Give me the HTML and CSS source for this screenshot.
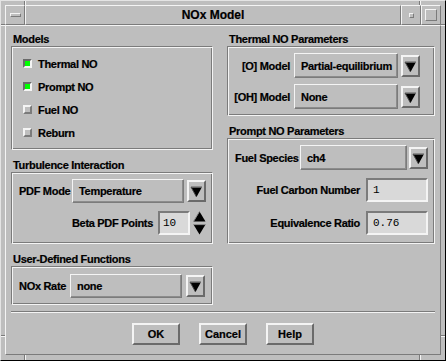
FILE: index.html
```html
<!DOCTYPE html>
<html>
<head>
<meta charset="utf-8">
<link rel="stylesheet" href="styles.css">
</head>
<body>
<div class="window">
  <div class="titlebar">
    <div class="tb-btn tb-menu"><span class="menu-bar"></span></div>
    <div class="tb-title">NOx Model</div>
    <div class="tb-btn tb-min"><span class="min-sq"></span></div>
    <div class="tb-btn tb-max"><span class="max-sq"></span></div>
  </div>
  <div class="client">
    <div class="columns">
      <div class="col col-left">
        <div class="label">Models</div>
        <div class="group models">
          <div class="check-row"><span class="check on"></span>Thermal NO</div>
          <div class="check-row"><span class="check on"></span>Prompt NO</div>
          <div class="check-row"><span class="check"></span>Fuel NO</div>
          <div class="check-row"><span class="check"></span>Reburn</div>
        </div>

        <div class="label gap-top">Turbulence Interaction</div>
        <div class="group turb">
          <div class="row pdf-row">
            <span class="lbl">PDF Mode</span>
            <div class="option opt-pdf">Temperature</div>
            <div class="arrow-btn"><svg width="13" height="16" viewBox="0 0 13 16"><polygon points="1,4 12,4 6.5,14" fill="#000"/><polyline points="1,4 12,4" stroke="#7b7b7b" stroke-width="1.5" fill="none"/><polyline points="1,4 6.5,14" stroke="#4a4a4a" stroke-width="1" fill="none"/></svg></div>
          </div>
          <div class="row beta-row">
            <span class="lbl">Beta PDF Points</span>
            <div class="textfield tf-beta">10</div>
            <div class="spinner">
              <svg width="13" height="11" viewBox="0 0 13 11"><polygon points="6.5,0.5 12.5,10.5 0.5,10.5" fill="#000"/><polyline points="6.5,0.5 0.5,10.5" stroke="#8a8a8a" stroke-width="1" fill="none"/></svg>
              <svg width="13" height="11" viewBox="0 0 13 11"><polygon points="0.5,0.5 12.5,0.5 6.5,10.5" fill="#000"/><polyline points="0.5,0.5 12.5,0.5" stroke="#8a8a8a" stroke-width="1.2" fill="none"/></svg>
            </div>
          </div>
        </div>

        <div class="label gap-top">User-Defined Functions</div>
        <div class="group udf">
          <div class="row udf-row">
            <span class="lbl">NOx Rate</span>
            <div class="option opt-udf">none</div>
            <div class="arrow-btn"><svg width="13" height="16" viewBox="0 0 13 16"><polygon points="1,4 12,4 6.5,14" fill="#000"/><polyline points="1,4 12,4" stroke="#7b7b7b" stroke-width="1.5" fill="none"/><polyline points="1,4 6.5,14" stroke="#4a4a4a" stroke-width="1" fill="none"/></svg></div>
          </div>
        </div>
      </div>

      <div class="col col-right">
        <div class="label">Thermal NO Parameters</div>
        <div class="group thermal">
          <div class="row th-row">
            <span class="lbl lbl-th">[O] Model</span>
            <div class="option opt-th">Partial-equilibrium</div>
            <div class="arrow-btn"><svg width="13" height="16" viewBox="0 0 13 16"><polygon points="1,4 12,4 6.5,14" fill="#000"/><polyline points="1,4 12,4" stroke="#7b7b7b" stroke-width="1.5" fill="none"/><polyline points="1,4 6.5,14" stroke="#4a4a4a" stroke-width="1" fill="none"/></svg></div>
          </div>
          <div class="row th-row">
            <span class="lbl lbl-th">[OH] Model</span>
            <div class="option opt-th">None</div>
            <div class="arrow-btn"><svg width="13" height="16" viewBox="0 0 13 16"><polygon points="1,4 12,4 6.5,14" fill="#000"/><polyline points="1,4 12,4" stroke="#7b7b7b" stroke-width="1.5" fill="none"/><polyline points="1,4 6.5,14" stroke="#4a4a4a" stroke-width="1" fill="none"/></svg></div>
          </div>
        </div>

        <div class="label gap-top">Prompt NO Parameters</div>
        <div class="group prompt">
          <div class="row fs-row">
            <span class="lbl">Fuel Species</span>
            <div class="option opt-fs">ch4</div>
            <div class="arrow-btn"><svg width="13" height="16" viewBox="0 0 13 16"><polygon points="1,4 12,4 6.5,14" fill="#000"/><polyline points="1,4 12,4" stroke="#7b7b7b" stroke-width="1.5" fill="none"/><polyline points="1,4 6.5,14" stroke="#4a4a4a" stroke-width="1" fill="none"/></svg></div>
          </div>
          <div class="row num-row">
            <span class="lbl">Fuel Carbon Number</span>
            <div class="textfield tf-num">1</div>
          </div>
          <div class="row num-row">
            <span class="lbl">Equivalence Ratio</span>
            <div class="textfield tf-num">0.76</div>
          </div>
        </div>
      </div>
    </div>

    <div class="separator"></div>

    <div class="buttons">
      <div class="btn">OK</div>
      <div class="btn">Cancel</div>
      <div class="btn">Help</div>
    </div>
  </div>

  <span class="notch notch-tl-v"></span>
  <span class="notch notch-tr-v"></span>
  <span class="notch notch-bl-v"></span>
  <span class="notch notch-br-v"></span>
  <span class="notch notch-tl-h"></span>
  <span class="notch notch-tr-h"></span>
  <span class="notch notch-bl-h"></span>
  <span class="notch notch-br-h"></span>
</div>
</body>
</html>
```

FILE: styles.css
```css
* { box-sizing: border-box; }

html, body {
  margin: 0;
  padding: 0;
  background: #bebebe;
}

body {
  width: 446px;
  height: 361px;
  overflow: hidden;
  font-family: "Liberation Sans", Arial, sans-serif;
  font-weight: bold;
  font-size: 11px;
  letter-spacing: -0.3px;
  color: #000;
  -webkit-text-stroke: 0.2px #000;
}

.window {
  position: relative;
  width: 446px;
  height: 361px;
  background: #bebebe;
  border-top: 1px solid #e4e4e4;
  border-left: 1px solid #e4e4e4;
  border-right: 1px solid #000;
  border-bottom: 1px solid #000;
  padding: 4px 4px 5px 4px;
  display: flex;
  flex-direction: column;
}

/* ---------- title bar ---------- */
.titlebar {
  height: 20px;
  display: flex;
  flex: none;
}

.tb-btn, .tb-title {
  border-top: 1px solid #f4f4f4;
  border-left: 1px solid #f4f4f4;
  border-right: 1px solid #7b7b7b;
  border-bottom: 1px solid #7b7b7b;
  background: #bebebe;
}

.tb-btn {
  width: 20px;
  display: flex;
  align-items: center;
  justify-content: center;
}

.tb-title {
  flex: 1;
  text-align: center;
  font-size: 12px;
  letter-spacing: 0;
  line-height: 19px;
}

.menu-bar {
  display: block;
  width: 11px;
  height: 4px;
  border-top: 1px solid #f4f4f4;
  border-left: 1px solid #f4f4f4;
  border-right: 1px solid #7b7b7b;
  border-bottom: 1px solid #7b7b7b;
}

.min-sq {
  display: block;
  width: 5px;
  height: 5px;
  border-top: 1px solid #f4f4f4;
  border-left: 1px solid #f4f4f4;
  border-right: 1px solid #7b7b7b;
  border-bottom: 1px solid #7b7b7b;
}

.max-sq {
  display: block;
  width: 12px;
  height: 12px;
  border-top: 1px solid #f4f4f4;
  border-left: 1px solid #f4f4f4;
  border-right: 1px solid #7b7b7b;
  border-bottom: 1px solid #7b7b7b;
}

/* ---------- client ---------- */
.client {
  flex: 1;
  border-top: 1px solid #f4f4f4;
  border-left: 1px solid #f4f4f4;
  border-right: 1px solid #7b7b7b;
  border-bottom: 1px solid #7b7b7b;
  padding: 6px 5px 0 5px;
  display: flex;
  flex-direction: column;
}

.columns {
  display: flex;
  gap: 14px;
}

.col-left { width: 202px; }
.col-right { width: 208px; }

.label {
  height: 14px;
  line-height: 14px;
  padding-left: 2px;
  white-space: nowrap;
}

.gap-top { margin-top: 8px; }

.group {
  border: 1px solid;
  border-color: #7b7b7b #f4f4f4 #f4f4f4 #7b7b7b;
  box-shadow: inset 1px 1px 0 #f4f4f4, inset -1px -1px 0 #7b7b7b;
  padding: 2px;
}

/* models */
.models {
  height: 104px;
  padding: 5px 2px 2px 11px;
}

.check-row {
  height: 23px;
  display: flex;
  align-items: center;
  white-space: nowrap;
}

.check {
  width: 9px;
  height: 9px;
  margin-right: 6px;
  margin-bottom: 1px;
  border: 2px solid;
  border-color: #f4f4f4 #7b7b7b #7b7b7b #f4f4f4;
  background: #bebebe;
}

.check.on {
  border-color: #6a6a6a #f4f4f4 #f4f4f4 #6a6a6a;
  background: #00ff00;
}

/* rows */
.row {
  display: flex;
  align-items: center;
  white-space: nowrap;
}

.lbl { white-space: nowrap; }

.option {
  height: 24px;
  line-height: 23px;
  padding-left: 6px;
  border: 1px solid;
  border-color: #f4f4f4 #7b7b7b #7b7b7b #f4f4f4;
  box-shadow: inset -1px -1px 0 #8c8c8c;
  overflow: hidden;
  white-space: nowrap;
}

.arrow-btn {
  width: 19px;
  height: 22px;
  border: 2px solid;
  border-color: #f4f4f4 #6a6a6a #6a6a6a #f4f4f4;
  display: flex;
  align-items: center;
  justify-content: center;
  flex: none;
}

.arrow-btn svg { display: block; }

.textfield {
  height: 24px;
  line-height: 20px;
  border: 2px solid;
  border-color: #7b7b7b #f4f4f4 #f4f4f4 #7b7b7b;
  background: #d9d9d9;
  font-family: "Liberation Mono", "Courier New", monospace;
  font-weight: normal;
  font-size: 11px;
  letter-spacing: 0;
  -webkit-text-stroke: 0;
  padding-left: 3px;
}

/* turbulence */
.turb {
  height: 72px;
  padding: 6px 6px 0 7px;
}

.pdf-row { height: 24px; }
.pdf-row .lbl { width: 53px; }
.opt-pdf { flex: 1; margin-right: 3px; }

.beta-row {
  height: 24px;
  margin-top: 8px;
  justify-content: flex-end;
}

.tf-beta {
  width: 32px;
  margin-left: 5px;
  margin-right: 3px;
}

.spinner {
  width: 13px;
  height: 24px;
  display: flex;
  flex-direction: column;
  justify-content: space-between;
  padding: 0;
}

.spinner svg { display: block; }

/* udf */
.udf {
  height: 39px;
  padding: 7px 7px 0 7px;
}

.udf-row { height: 24px; }
.udf-row .lbl { width: 51px; }
.opt-udf { flex: 1; margin-right: 4px; }

/* thermal */
.thermal {
  height: 70px;
  padding: 6px 2px 0 4px;
}

.th-row { height: 25px; }
.th-row + .th-row { margin-top: 6px; }

.lbl-th {
  width: 60px;
  text-align: right;
  padding-right: 2px;
}

.opt-th {
  width: 104px;
  height: 25px;
  line-height: 24px;
  margin-left: 2px;
  margin-right: 3px;
}

/* prompt */
.prompt {
  height: 106px;
  padding: 6px 6px 0 7px;
}

.fs-row { height: 25px; }
.fs-row .lbl { width: 63px; }
.opt-fs {
  height: 25px;
  line-height: 24px;
  flex: 1;
  margin-left: 2px;
  margin-right: 2px;
}

.num-row {
  height: 24px;
  justify-content: flex-end;
  margin-top: 8px;
}

.num-row + .num-row { margin-top: 9px; }

.tf-num {
  width: 62px;
  margin-left: 6px;
  padding-left: 5px;
}

/* separator + buttons */
.separator {
  margin-top: 6px;
  height: 2px;
  border-top: 1px solid #7b7b7b;
  border-bottom: 1px solid #f4f4f4;
}

.buttons {
  margin-top: 10px;
  display: flex;
  justify-content: center;
  gap: 19px;
}

.btn {
  width: 48px;
  height: 22px;
  line-height: 18px;
  text-align: center;
  border: 2px solid;
  border-color: #f4f4f4 #6a6a6a #6a6a6a #f4f4f4;
  letter-spacing: 0;
}

/* resize-handle notches in window border (decoration overlaying the frame) */
.notch {
  position: absolute;
  display: block;
}

.notch-tl-v, .notch-tr-v, .notch-bl-v, .notch-br-v {
  width: 2px;
  height: 4px;
  border-left: 1px solid #7b7b7b;
  border-right: 1px solid #f4f4f4;
}

.notch-tl-v { left: 23px; top: 0; }
.notch-tr-v { left: 418px; top: 0; }
.notch-bl-v { left: 23px; bottom: 0; height: 5px; }
.notch-br-v { left: 418px; bottom: 0; height: 5px; }

.notch-tl-h, .notch-tr-h, .notch-bl-h, .notch-br-h {
  width: 4px;
  height: 2px;
  border-top: 1px solid #7b7b7b;
  border-bottom: 1px solid #f4f4f4;
}

.notch-tl-h { left: 0; top: 23px; }
.notch-bl-h { left: 0; top: 334px; }
.notch-tr-h { right: 0; top: 23px; }
.notch-br-h { right: 0; top: 334px; }
```
